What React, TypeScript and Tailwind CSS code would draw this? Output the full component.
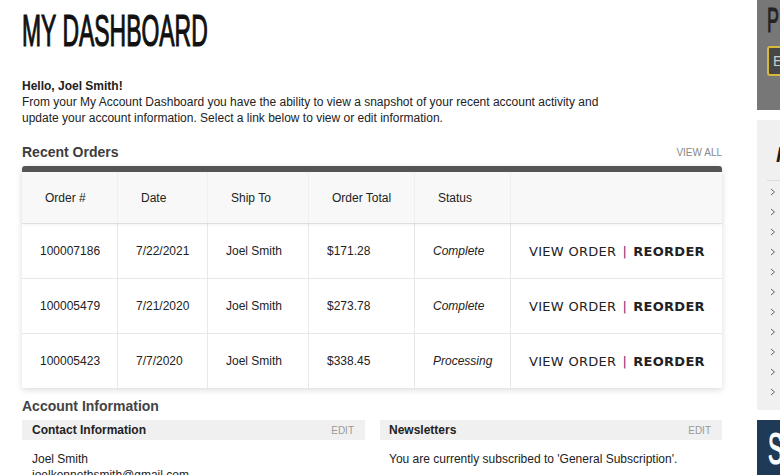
import React from "react";

type Order = {
  id: string;
  date: string;
  shipTo: string;
  total: string;
  status: string;
};

const orders: Order[] = [
  { id: "100007186", date: "7/22/2021", shipTo: "Joel Smith", total: "$171.28", status: "Complete" },
  { id: "100005479", date: "7/21/2020", shipTo: "Joel Smith", total: "$273.78", status: "Complete" },
  { id: "100005423", date: "7/7/2020", shipTo: "Joel Smith", total: "$338.45", status: "Processing" },
];

const accountLinks = [
  "Account Dashboard",
  "Account Information",
  "Address Book",
  "My Orders",
  "Billing Agreements",
  "Recurring Profiles",
  "My Product Reviews",
  "My Wishlist",
  "My Applications",
  "Newsletter Subscriptions",
  "My Downloadable Products",
];

const cols = "grid grid-cols-[96px_90px_101px_106px_96px_1fr]";

const Chevron = () => (
  <svg width="6" height="8" viewBox="0 0 6 8" className="shrink-0">
    <polyline points="1,1 4.5,4 1,7" fill="none" stroke="#666" strokeWidth="1" />
  </svg>
);

const App: React.FC = () => {
  return (
    <div className="flex w-[780px] h-[475px] overflow-hidden bg-white text-[#222] font-['Liberation_Sans',Arial,sans-serif]">
      <main className="ml-[22px] w-[700px] shrink-0">
        <h1 className="mt-[8px] text-[45px] leading-none font-normal text-[#111] [-webkit-text-stroke:1.2px_#111] scale-x-[0.51] origin-left whitespace-nowrap">
          MY DASHBOARD
        </h1>

        <div className="mt-[25px] text-[12px] leading-[16px]">
          <p className="font-bold">Hello, Joel Smith!</p>
          <p className="w-[600px]">
            From your My Account Dashboard you have the ability to view a snapshot of your recent account activity and
            update your account information. Select a link below to view or edit information.
          </p>
        </div>

        <div className="mt-[16px] mb-[4px] flex items-center justify-between h-[20px]">
          <h2 className="text-[14px] font-bold text-[#3d3d3d]">Recent Orders</h2>
          <a className="text-[10px] text-[#888] uppercase">View All</a>
        </div>

        <div className="rounded-t-[3px] bg-white shadow-[0_2px_6px_rgba(0,0,0,0.14)]">
          <div className="h-[6px] rounded-t-[3px] bg-[#555]" />
          <div className={`${cols} h-[51px] bg-[#f8f8f8] text-[12px] shadow-[0_2px_3px_rgba(0,0,0,0.05)] relative`}>
            {["Order #", "Date", "Ship To", "Order Total", "Status", ""].map((h, i) => (
              <div
                key={i}
                className={`flex items-center pl-[23px] ${i < 5 ? "border-r border-[#efefef]" : ""}`}
              >
                {h}
              </div>
            ))}
          </div>
          {orders.map((o) => (
            <div key={o.id} className={`${cols} h-[55px] border-t border-[#e8e8e8] text-[12px]`}>
              <div className="flex items-center pl-[18px] border-r border-[#e8e8e8]">{o.id}</div>
              <div className="flex items-center pl-[18px] border-r border-[#e8e8e8]">{o.date}</div>
              <div className="flex items-center pl-[18px] border-r border-[#e8e8e8]">{o.shipTo}</div>
              <div className="flex items-center pl-[18px] border-r border-[#e8e8e8]">{o.total}</div>
              <div className="flex items-center pl-[18px] border-r border-[#e8e8e8] italic">{o.status}</div>
              <div className="flex items-center pl-[18px] pt-[2px] text-[13px] tracking-[0.3px] font-['DejaVu_Sans',Verdana,sans-serif]">
                <a>VIEW ORDER</a>
                <span className="mx-[6px] text-[#7b2b7b]">|</span>
                <a className="font-bold">REORDER</a>
              </div>
            </div>
          ))}
        </div>

        <h2 className="mt-[8px] mb-[4px] h-[20px] leading-[20px] text-[14px] font-bold text-[#444]">
          Account Information
        </h2>
        <div className="flex gap-[15px] text-[12px]">
          <div className="w-[343px]">
            <div className="flex items-center justify-between h-[20px] bg-[#f0f0f0] pl-[10px] pr-[11px]">
              <h3 className="font-bold">Contact Information</h3>
              <a className="text-[10px] text-[#999]">EDIT</a>
            </div>
            <div className="pt-[11px] pl-[10px] leading-[16px]">
              <p>Joel Smith</p>
              <p>joelkennethsmith@gmail.com</p>
            </div>
          </div>
          <div className="w-[342px]">
            <div className="flex items-center justify-between h-[20px] bg-[#f0f0f0] pl-[9px] pr-[11px]">
              <h3 className="font-bold">Newsletters</h3>
              <a className="text-[10px] text-[#999]">EDIT</a>
            </div>
            <div className="pt-[11px] pl-[9px] leading-[16px]">
              <p>You are currently subscribed to 'General Subscription'.</p>
            </div>
          </div>
        </div>
      </main>

      <aside className="ml-[35px] w-[260px] shrink-0 flex flex-col gap-[10px]">
        <div className="h-[110px] shrink-0 bg-[#777] px-[10px] pt-[2px]">
          <h3 className="text-[35px] leading-none font-normal text-[#222] [-webkit-text-stroke:1px_#222] scale-x-[0.51] origin-left whitespace-nowrap">
            PROMO CODE
          </h3>
          <div className="mt-[9px] h-[30px] w-[230px] rounded-[3px] border-2 border-[#d8b83a] bg-[#474747] flex items-center px-[4px] text-[14px] text-[#ccc]">
            Enter promo code
          </div>
        </div>

        <div className="h-[290px] shrink-0 bg-[#f0f0f0] px-[10px]">
          <h3 className="h-[60px] pt-[24px] pl-[9px] text-[22px] leading-none font-bold italic text-[#1a1a1a] whitespace-nowrap">
            MY ACCOUNT
          </h3>
          <div className="border-t border-[#ddd]" />
          <ul className="pt-[1px]">
            {accountLinks.map((l) => (
              <li key={l} className="h-[20px] flex items-center gap-[12px] pl-[3px] text-[12px] whitespace-nowrap">
                <Chevron />
                <span>{l}</span>
              </li>
            ))}
          </ul>
        </div>

        <div className="h-[60px] shrink-0 bg-[#1f3a57] px-[11px] pt-[6px]">
          <h3 className="text-[45px] leading-none font-normal text-white [-webkit-text-stroke:1.2px_#fff] scale-x-[0.51] origin-left whitespace-nowrap">
            SHOP
          </h3>
        </div>
      </aside>
    </div>
  );
};

export default App;
